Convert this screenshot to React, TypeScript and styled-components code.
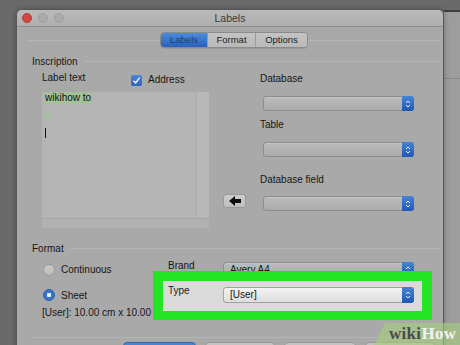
import styled, { createGlobalStyle } from "styled-components";

const GlobalStyle = createGlobalStyle`
  html, body {
    margin: 0;
    padding: 0;
  }
  body {
    background: #6a6a6a;
    font-family: "Liberation Sans", Arial, sans-serif;
    color: #161616;
  }
`;

const Screen = styled.div`
  position: relative;
  width: 460px;
  height: 345px;
  overflow: hidden;
  box-sizing: border-box;
  padding: 10px 0 0 17px;
  display: flex;
  align-items: flex-start;
  background: #6a6a6a;
`;

const Window = styled.div`
  position: relative;
  flex: none;
  width: 426px;
  height: 370px;
  display: flex;
  flex-direction: column;
  background: #a9a9a9;
  border-radius: 5px 5px 0 0;
  box-shadow: 0 0 6px rgba(0, 0, 0, 0.4);
  font-size: 10px;
`;

const BackWindow = styled.div`
  flex: 1;
  align-self: stretch;
  margin-left: 1px;
  border-top: 2px solid #3e3e3e;
  background: linear-gradient(
    to bottom,
    #9d9d9d 0 66px,
    #878787 66px 67px,
    #9d9d9d 67px
  );
`;

const TitleBar = styled.div`
  flex: none;
  height: 17px;
  box-sizing: border-box;
  display: grid;
  grid-template-columns: 1fr auto 1fr;
  align-items: center;
  background: linear-gradient(to bottom, #bababa, #afafaf);
  border-bottom: 1px solid #8e8e8e;
  border-radius: 5px 5px 0 0;
`;

const Lights = styled.div`
  display: flex;
  gap: 6px;
  padding-left: 5px;
`;

const Light = styled.span<{ $color: string; $edge: string }>`
  width: 10px;
  height: 10px;
  border-radius: 50%;
  box-sizing: border-box;
  background: ${(p) => p.$color};
  border: 1px solid ${(p) => p.$edge};
`;

const TitleText = styled.div`
  font-size: 10.5px;
  color: #3a3a3a;
`;

const TabRow = styled.div`
  display: flex;
  align-items: center;
  padding: 5px 3px 0 11px;
`;

const TabLine = styled.div`
  flex: 1;
  height: 1px;
  background: #b6b6b6;
`;

const Tabs = styled.div`
  display: flex;
  border: 1px solid #8b8b8b;
  border-radius: 4px;
  overflow: hidden;
  box-shadow: 0 1px 0 rgba(0, 0, 0, 0.08);
`;

const Tab = styled.div<{ $active?: boolean; $width: number }>`
  width: ${(p) => p.$width}px;
  height: 14px;
  line-height: 14px;
  text-align: center;
  font-size: 9.5px;
  overflow: hidden;
  white-space: nowrap;
  color: ${(p) => (p.$active ? "#1e3f75" : "#222")};
  background: ${(p) =>
    p.$active
      ? "linear-gradient(to bottom, #4d8bd9, #2862bb)"
      : "linear-gradient(to bottom, #c4c4c4, #b9b9b9)"};
  & + & {
    border-left: 1px solid #9a9a9a;
  }
`;

const SectionHead = styled.div<{ $top: number }>`
  display: flex;
  align-items: center;
  gap: 6px;
  height: 12px;
  margin-top: ${(p) => p.$top}px;
  padding: 0 3px 0 15px;
  &::after {
    content: "";
    flex: 1;
    height: 1px;
    background: #b5b5b5;
  }
`;

const InscriptionBody = styled.div`
  display: flex;
  align-items: flex-start;
  padding-left: 25px;
  margin-top: 5px;
`;

const LeftCol = styled.div`
  width: 167px;
  display: flex;
  flex-direction: column;
`;

const LabelRow = styled.div`
  height: 14px;
  display: flex;
  align-items: center;
`;

const LabelCaption = styled.span`
  width: 89px;
  margin-top: -3px;
`;

const CheckBox = styled.span`
  width: 11px;
  height: 11px;
  border-radius: 2px;
  background: linear-gradient(to bottom, #4c86d6, #2d63b8);
  display: flex;
  align-items: center;
  justify-content: center;
  margin-right: 6px;
  margin-top: 3px;
`;

const TextArea = styled.div`
  margin-top: 6px;
  height: 136px;
  display: grid;
  grid-template-columns: 1fr 13px;
  grid-template-rows: 1fr 10px;
  background: #b4b4b4;
`;

const TextContent = styled.div`
  padding: 0 0 0 3px;
  display: flex;
  flex-direction: column;
  align-items: flex-start;
`;

const Highlight = styled.span`
  height: 12px;
  line-height: 12px;
  background: rgba(150, 205, 130, 0.55);
  color: #111;
`;

const EmptyMark = styled.span`
  width: 4px;
  height: 8px;
  margin: 8px 0 0 1px;
  background: rgba(150, 205, 130, 0.6);
`;

const Caret = styled.span`
  width: 1px;
  height: 10px;
  margin-top: 8px;
  background: #111;
`;

const VScroll = styled.div`
  background: #b8b8b8;
  border-left: 1px solid #acacac;
`;

const HScroll = styled.div`
  grid-column: 1 / span 2;
  background: #b1b1b1;
  border-top: 1px solid #a6a6a6;
`;

const ArrowButton = styled.div`
  width: 23px;
  height: 14px;
  margin: 122px 14px 0 14px;
  box-sizing: border-box;
  border-radius: 3px;
  border: 1px solid #9a9a9a;
  background: linear-gradient(to bottom, #cdcdcd, #bdbdbd);
  display: flex;
  align-items: center;
  justify-content: center;
`;

const RightCol = styled.div`
  width: 154px;
  display: flex;
  flex-direction: column;
`;

const FieldLabel = styled.div<{ $top: number }>`
  height: 14px;
  line-height: 14px;
  margin-top: ${(p) => p.$top}px;
`;

const SelectBox = styled.div<{ $top?: number; $light?: boolean }>`
  width: 151px;
  height: 15px;
  margin: ${(p) => p.$top ?? 0}px 0 0 3px;
  box-sizing: border-box;
  display: flex;
  border: 1px solid ${(p) => (p.$light ? "#a2a2a2" : "#8d8d8d")};
  border-radius: 3px;
  background: ${(p) =>
    p.$light
      ? "linear-gradient(to bottom, #f2f2f2, #dedede)"
      : "linear-gradient(to bottom, #bbbbbb, #ababab)"};
  box-shadow: inset 0 1px 0 rgba(255, 255, 255, 0.15);
`;

const SelectValue = styled.span`
  flex: 1;
  padding-left: 6px;
  line-height: 14px;
  overflow: hidden;
  white-space: nowrap;
`;

const Stepper = styled.span`
  width: 12px;
  margin: -1px -1px -1px 0;
  border-radius: 0 3px 3px 0;
  background: linear-gradient(to bottom, #4684d8, #2157b3);
  display: flex;
  align-items: center;
  justify-content: center;
`;

const FormatGrid = styled.div`
  display: grid;
  grid-template-columns: 125px 55px 191px;
  grid-template-rows: 15px 16px;
  row-gap: 10px;
  padding-left: 26px;
  margin-top: 8px;
  align-items: center;
`;

const RadioCell = styled.div`
  display: flex;
  align-items: center;
  gap: 6px;
`;

const Radio = styled.span<{ $on?: boolean }>`
  width: 12px;
  height: 12px;
  box-sizing: border-box;
  border-radius: 50%;
  border: 1px solid ${(p) => (p.$on ? "#2a5fb2" : "#9a9a9a")};
  background: ${(p) =>
    p.$on
      ? "radial-gradient(circle, #e8eef8 0 2px, #3a74c8 2.5px)"
      : "linear-gradient(to bottom, #c9c9c9, #bcbcbc)"};
`;

const GridLabel = styled.span`
  align-self: start;
  margin-top: -2px;
`;

const FullSelect = styled(SelectBox)`
  width: 191px;
  height: 100%;
  margin: 0;
`;

const InfoText = styled.div`
  height: 12px;
  line-height: 12px;
  margin-top: 4px;
  padding-left: 25px;
`;

const Separator = styled.div`
  height: 1px;
  margin: 18px 3px 0 15px;
  background: #b5b5b5;
`;

const ButtonRow = styled.div`
  display: flex;
  gap: 9px;
  margin-top: 4px;
  padding-left: 106px;
`;

const PushButton = styled.div<{ $width: number; $primary?: boolean }>`
  width: ${(p) => p.$width}px;
  height: 20px;
  box-sizing: border-box;
  border-radius: 4px;
  border: 1px solid ${(p) => (p.$primary ? "#2f63ad" : "#979797")};
  background: ${(p) =>
    p.$primary
      ? "linear-gradient(to bottom, #4c87d4, #2d66b9)"
      : "linear-gradient(to bottom, #c4c4c4, #b6b6b6)"};
`;

const Annotation = styled.div`
  position: absolute;
  left: 136px;
  top: 261px;
  width: 279px;
  height: 49px;
  box-sizing: border-box;
  border: 10px solid #25e325;
  border-bottom-width: 9px;
  background: #dadada;
  display: flex;
  align-items: flex-start;
  padding: 0 0 0 5px;
`;

const AnnotationLabel = styled.span`
  width: 55px;
  margin-top: 4px;
  color: #1a1a1a;
`;

const AnnotationSelect = styled(SelectBox)`
  width: 191px;
  height: 16px;
  margin: 6px 0 0 0;
`;

const Watermark = styled.div`
  position: absolute;
  right: 0;
  bottom: 0;
  width: 86px;
  height: 22px;
  box-sizing: border-box;
  padding: 2px 0 0 15px;
  background: rgba(165, 205, 125, 0.62);
  clip-path: polygon(11px 0, 100% 0, 100% 100%, 0 100%);
  font-family: "Liberation Serif", "DejaVu Serif", serif;
  font-weight: bold;
  font-size: 17px;
  line-height: 17px;
  letter-spacing: 0.3px;
  white-space: nowrap;
`;

const WikiPart = styled.span`
  color: #4b4b4b;
`;

const HowPart = styled.span`
  color: #f1f1f1;
`;

const Chevrons = () => (
  <svg width="6" height="10" viewBox="0 0 6 10">
    <path d="M1 4 L3 2 L5 4 M1 6 L3 8 L5 6" stroke="#eef3fb" strokeWidth="1" fill="none" />
  </svg>
);

const Select = ({ value, top, light }: { value?: string; top?: number; light?: boolean }) => (
  <SelectBox $top={top} $light={light}>
    <SelectValue>{value}</SelectValue>
    <Stepper>
      <Chevrons />
    </Stepper>
  </SelectBox>
);

export default function App() {
  return (
    <>
      <GlobalStyle />
      <Screen>
        <Window>
          <TitleBar>
            <Lights>
              <Light $color="#cf4741" $edge="#b53a35" />
              <Light $color="#ababab" $edge="#9c9c9c" />
              <Light $color="#ababab" $edge="#9c9c9c" />
            </Lights>
            <TitleText>Labels</TitleText>
            <span />
          </TitleBar>

          <TabRow>
            <TabLine />
            <Tabs>
              <Tab $active $width={46}>Labels</Tab>
              <Tab $width={47}>Format</Tab>
              <Tab $width={51}>Options</Tab>
            </Tabs>
            <TabLine />
          </TabRow>

          <SectionHead $top={7}>Inscription</SectionHead>
          <InscriptionBody>
            <LeftCol>
              <LabelRow>
                <LabelCaption>Label text</LabelCaption>
                <CheckBox>
                  <svg width="9" height="9" viewBox="0 0 9 9">
                    <path d="M1.5 4.8 L3.6 7 L7.6 1.6" stroke="#f4f7fc" strokeWidth="1.4" fill="none" />
                  </svg>
                </CheckBox>
                <span>Address</span>
              </LabelRow>
              <TextArea>
                <TextContent>
                  <Highlight>wikihow to</Highlight>
                  <EmptyMark />
                  <Caret />
                </TextContent>
                <VScroll />
                <HScroll />
              </TextArea>
            </LeftCol>

            <ArrowButton>
              <svg width="12" height="10" viewBox="0 0 12 10">
                <polygon points="0,5 6,0 6,3 12,3 12,7 6,7 6,10" fill="#0e0e0e" />
              </svg>
            </ArrowButton>

            <RightCol>
              <FieldLabel $top={0}>Database</FieldLabel>
              <Select top={10} />
              <FieldLabel $top={7}>Table</FieldLabel>
              <Select top={10} />
              <FieldLabel $top={16}>Database field</FieldLabel>
              <Select top={9} />
            </RightCol>
          </InscriptionBody>

          <SectionHead $top={14}>Format</SectionHead>
          <FormatGrid>
            <RadioCell>
              <Radio />
              <span>Continuous</span>
            </RadioCell>
            <GridLabel>Brand</GridLabel>
            <FullSelect>
              <SelectValue>Avery A4</SelectValue>
              <Stepper>
                <Chevrons />
              </Stepper>
            </FullSelect>
            <RadioCell>
              <Radio $on />
              <span>Sheet</span>
            </RadioCell>
            <GridLabel>Type</GridLabel>
            <FullSelect>
              <SelectValue>[User]</SelectValue>
              <Stepper>
                <Chevrons />
              </Stepper>
            </FullSelect>
          </FormatGrid>
          <InfoText>[User]: 10.00 cm x 10.00 cm (1 x 1)</InfoText>

          <Separator />
          <ButtonRow>
            <PushButton $primary $width={73} />
            <PushButton $width={70} />
            <PushButton $width={72} />
            <PushButton $width={70} />
          </ButtonRow>

          <Annotation>
            <AnnotationLabel>Type</AnnotationLabel>
            <AnnotationSelect $light>
              <SelectValue>[User]</SelectValue>
              <Stepper>
                <Chevrons />
              </Stepper>
            </AnnotationSelect>
          </Annotation>
        </Window>
        <BackWindow />
        <Watermark>
          <WikiPart>wiki</WikiPart>
          <HowPart>How</HowPart>
        </Watermark>
      </Screen>
    </>
  );
}
